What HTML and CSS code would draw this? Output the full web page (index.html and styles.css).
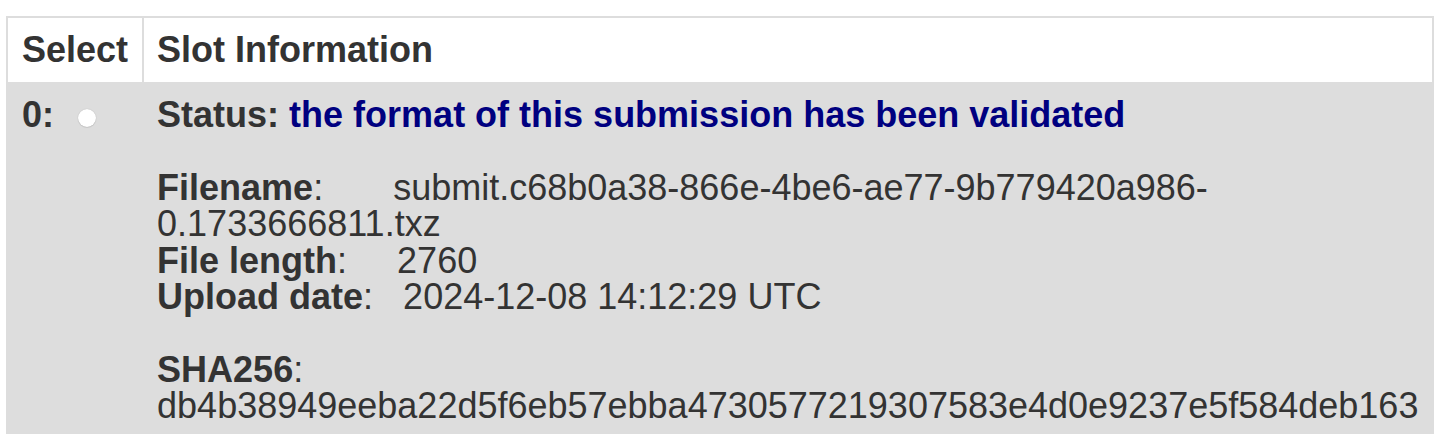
FILE: index.html
```html
<!DOCTYPE html>
<html lang="en">
<head>
<meta charset="utf-8">
<title>Slots</title>
<link rel="stylesheet" href="styles.css">
</head>
<body>
<table class="slots">
  <thead>
    <tr>
      <th class="sel">Select</th>
      <th class="info">Slot Information</th>
    </tr>
  </thead>
  <tbody>
    <tr class="slot">
      <td class="sel"><b>0:</b> <input type="radio" name="slot" class="radio"></td>
      <td class="info">
        <div class="status"><b>Status:</b> <b class="ok">the format of this submission has been validated</b></div>
        <div class="block">
          <div><b>Filename</b>:<span class="val gap-fn">submit.c68b0a38-866e-4be6-ae77-9b779420a986-<wbr>0.1733666811.txz</span></div>
          <div><b>File length</b>:<span class="val gap-len">2760</span></div>
          <div><b>Upload date</b>:<span class="val gap-date">2024-12-08 14:12:29 UTC</span></div>
        </div>
        <div class="block">
          <div><b>SHA256</b>:</div>
          <div class="hash">db4b38949eeba22d5f6eb57ebba4730577219307583e4d0e9237e5f584deb163</div>
        </div>
      </td>
    </tr>
  </tbody>
</table>
</body>
</html>
```
FILE: styles.css
```css
html {
  overflow: hidden;
  background: #fff;
}

body {
  margin: 0;
  padding: 16px 0 40px 6px;
  font-family: "Liberation Sans", Arial, Helvetica, sans-serif;
  font-size: 36px;
  color: #333;
}

.slots {
  border-collapse: separate;
  border-spacing: 0;
  border: 2px solid #ddd;
}

.slots th {
  text-align: left;
  font-weight: bold;
  background: #fff;
  line-height: normal;
  padding: 11px 14px;
  vertical-align: middle;
}

.slots th.info {
  padding-left: 13px;
}

.slots .sel {
  border-right: 2px solid #ddd;
  white-space: nowrap;
}

.slot td {
  background: #ddd;
  vertical-align: top;
  line-height: 36.4px;
  padding: 15px 14px 15px 14px;
}

.slot td.info {
  padding-left: 13px;
}

.radio {
  -webkit-appearance: none;
  appearance: none;
  width: 18px;
  height: 18px;
  margin: 0 0 0 14px;
  border-radius: 50%;
  background: #fff;
  box-shadow: 0 0 1px rgba(0, 0, 0, 0.25), 0 1px 1px rgba(0, 0, 0, 0.08);
  vertical-align: middle;
  position: relative;
  top: 1px;
}

.ok {
  color: #000080;
}

.block {
  margin-top: 36.4px;
}

.val {
  font-weight: normal;
}

.gap-fn {
  margin-left: 70px;
}

.gap-len {
  margin-left: 50px;
}

.gap-date {
  margin-left: 30px;
}

.hash {
  white-space: nowrap;
}
```
